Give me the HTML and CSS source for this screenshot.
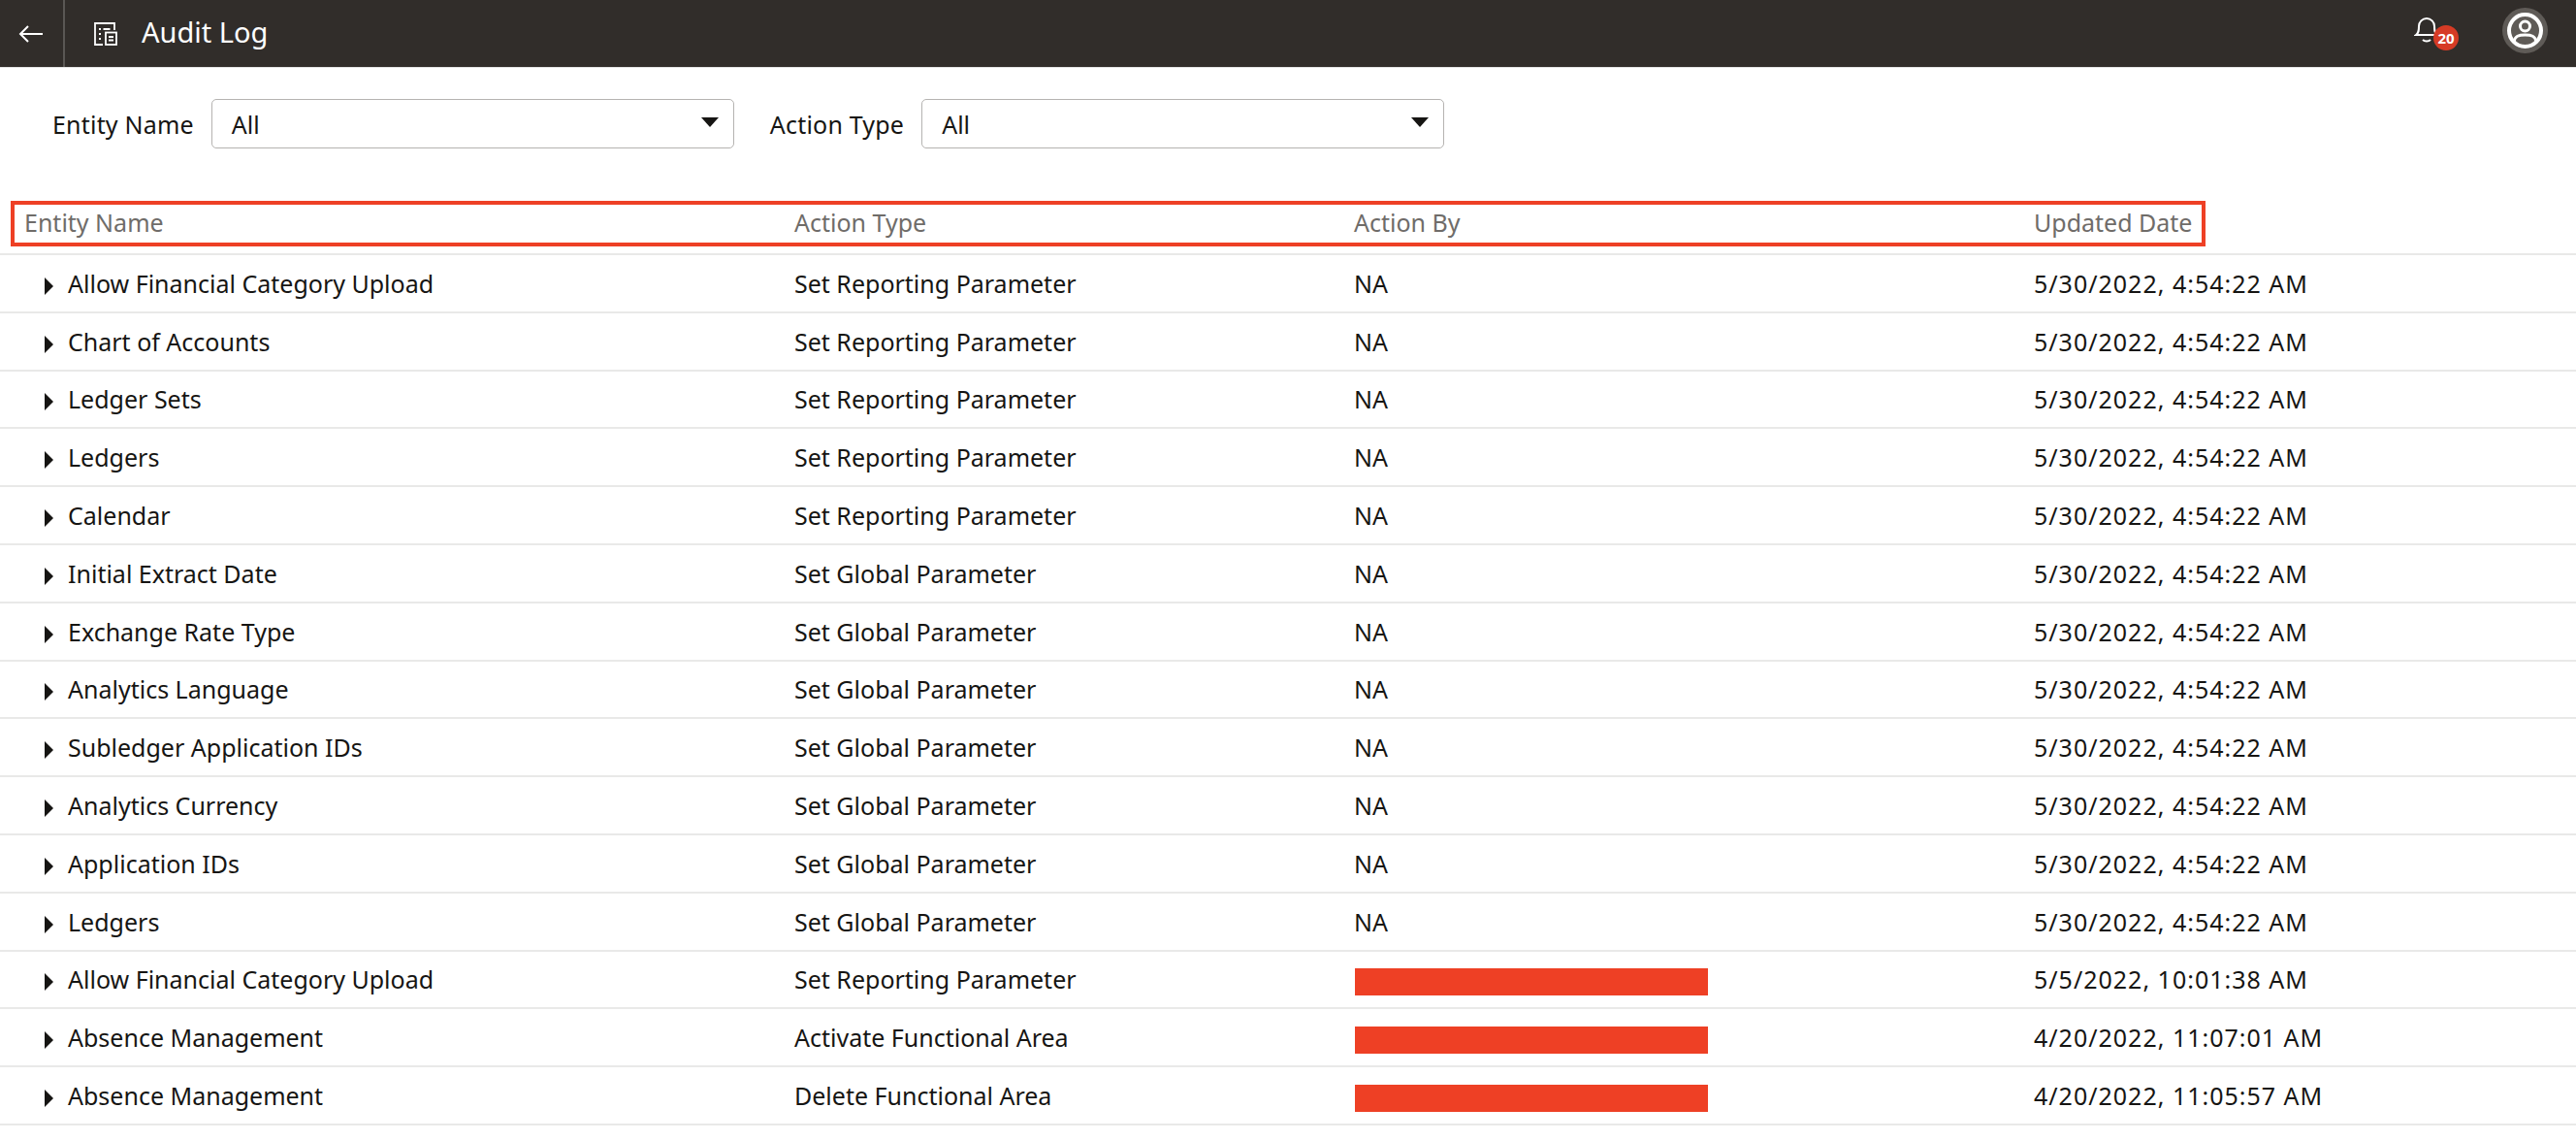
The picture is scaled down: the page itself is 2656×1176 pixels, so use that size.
FILE: index.html
```html
<!DOCTYPE html>
<html lang="en">
<head>
<meta charset="utf-8">
<title>Audit Log</title>
<link rel="stylesheet" href="styles.css">
</head>
<body>
<header class="topbar">
    <a class="back" href="#" aria-label="Back">
        <svg width="26" height="20" viewBox="0 0 26 20" fill="none" stroke="#fff" stroke-width="2"><path d="M25 10H2M10 2l-8 8 8 8"/></svg>
    </a>
    <div class="title">
        <svg width="24" height="24" viewBox="0 0 24 24" fill="none" stroke="#fff" stroke-width="1.800"><path d="M9 23H1V1h20v7"/><rect x="12" y="10.500" width="11" height="12.500"/><path d="M15 15h5M15 18.500h5M5 7h2M9.500 7h7M5 12h2M5 17h2"/></svg>
        <h1>Audit Log</h1>
    </div>
    <div class="bell">
        <svg width="26" height="28" viewBox="0 0 26 28" fill="none" stroke="#fff" stroke-width="2"><path d="M2 19c3-2 3-5 3-9a8 8 0 0 1 16 0c0 4 0 7 3 9z"/><path d="M9 24c2 2 6 2 8 0"/></svg>
        <span class="badge">20</span>
    </div>
    <div class="avatar">
        <svg width="47" height="47" viewBox="0 0 47 47" fill="none"><circle cx="23.5" cy="23.5" r="23.5" fill="#5f5b57"/><circle cx="23.5" cy="23.5" r="16.5" stroke="#fff" stroke-width="4"/><circle cx="23.5" cy="19" r="5" stroke="#fff" stroke-width="3"/><path d="M12 35c1-6 5-7 11.500-7S34 29 35 35" stroke="#fff" stroke-width="3"/></svg>
    </div>
</header>

<form class="filters">
    <label class="filter-label">Entity Name</label>
    <div class="select"><span>All</span><i class="caret"></i></div>
    <label class="filter-label second">Action Type</label>
    <div class="select"><span>All</span><i class="caret"></i></div>
</form>

<div class="log">
    <div class="callout"></div>
    <table>
        <colgroup>
            <col class="col-entity"><col class="col-type"><col class="col-by"><col>
        </colgroup>
        <thead>
            <tr><th class="first">Entity Name</th><th>Action Type</th><th>Action By</th><th>Updated Date</th></tr>
        </thead>
        <tbody>
            <tr><td class="first"><i class="arrow"></i>Allow Financial Category Upload</td><td>Set Reporting Parameter</td><td>NA</td><td class="date">5/30/2022, 4:54:22 AM</td></tr>
            <tr><td class="first"><i class="arrow"></i>Chart of Accounts</td><td>Set Reporting Parameter</td><td>NA</td><td class="date">5/30/2022, 4:54:22 AM</td></tr>
            <tr><td class="first"><i class="arrow"></i>Ledger Sets</td><td>Set Reporting Parameter</td><td>NA</td><td class="date">5/30/2022, 4:54:22 AM</td></tr>
            <tr><td class="first"><i class="arrow"></i>Ledgers</td><td>Set Reporting Parameter</td><td>NA</td><td class="date">5/30/2022, 4:54:22 AM</td></tr>
            <tr><td class="first"><i class="arrow"></i>Calendar</td><td>Set Reporting Parameter</td><td>NA</td><td class="date">5/30/2022, 4:54:22 AM</td></tr>
            <tr><td class="first"><i class="arrow"></i>Initial Extract Date</td><td>Set Global Parameter</td><td>NA</td><td class="date">5/30/2022, 4:54:22 AM</td></tr>
            <tr><td class="first"><i class="arrow"></i>Exchange Rate Type</td><td>Set Global Parameter</td><td>NA</td><td class="date">5/30/2022, 4:54:22 AM</td></tr>
            <tr><td class="first"><i class="arrow"></i>Analytics Language</td><td>Set Global Parameter</td><td>NA</td><td class="date">5/30/2022, 4:54:22 AM</td></tr>
            <tr><td class="first"><i class="arrow"></i>Subledger Application IDs</td><td>Set Global Parameter</td><td>NA</td><td class="date">5/30/2022, 4:54:22 AM</td></tr>
            <tr><td class="first"><i class="arrow"></i>Analytics Currency</td><td>Set Global Parameter</td><td>NA</td><td class="date">5/30/2022, 4:54:22 AM</td></tr>
            <tr><td class="first"><i class="arrow"></i>Application IDs</td><td>Set Global Parameter</td><td>NA</td><td class="date">5/30/2022, 4:54:22 AM</td></tr>
            <tr><td class="first"><i class="arrow"></i>Ledgers</td><td>Set Global Parameter</td><td>NA</td><td class="date">5/30/2022, 4:54:22 AM</td></tr>
            <tr><td class="first"><i class="arrow"></i>Allow Financial Category Upload</td><td>Set Reporting Parameter</td><td><span class="redacted"></span></td><td class="date">5/5/2022, 10:01:38 AM</td></tr>
            <tr><td class="first"><i class="arrow"></i>Absence Management</td><td>Activate Functional Area</td><td><span class="redacted"></span></td><td class="date">4/20/2022, 11:07:01 AM</td></tr>
            <tr><td class="first"><i class="arrow"></i>Absence Management</td><td>Delete Functional Area</td><td><span class="redacted"></span></td><td class="date">4/20/2022, 11:05:57 AM</td></tr>
        </tbody>
    </table>
</div>
</body>
</html>
```

FILE: styles.css
```css
html, body {
    margin: 0;
    height: 1176px;
    overflow: hidden;
    background: #fff;
    font-family: "Noto Sans", "Open Sans", sans-serif;
    color: #161513;
}

.topbar {
    display: flex;
    align-items: center;
    height: 69px;
    background: #312d2a;
    border-bottom: 1px solid #e4e4e4;
    color: #fff;
}

.back {
    display: flex;
    align-items: center;
    justify-content: center;
    box-sizing: border-box;
    width: 67px;
    height: 69px;
    padding-right: 2px;
    border-right: 2px solid #5a5754;
}

.title {
    display: flex;
    align-items: center;
    flex: 1;
    gap: 25px;
    padding-left: 30px;
}

.title h1 {
    margin: 0 0 4px;
    font-size: 29px;
    font-weight: 400;
}

.bell {
    position: relative;
    width: 26px;
    height: 28px;
    margin-right: 65px;
    margin-top: -7px;
}

.bell svg {
    display: block;
}

.badge {
    position: absolute;
    left: 20px;
    top: 9px;
    width: 26px;
    height: 26px;
    border-radius: 50%;
    background: #d63b25;
    color: #fff;
    font-size: 15px;
    font-weight: 700;
    line-height: 26px;
    text-align: center;
}

.avatar {
    height: 47px;
    margin-right: 29px;
    margin-top: -7px;
}

.filters {
    display: flex;
    align-items: center;
    height: 51px;
    margin-top: 32px;
    padding-left: 54px;
}

.filter-label {
    margin-right: 18px;
    font-size: 25px;
    letter-spacing: 0.2px;
}

.filter-label.second {
    margin-left: 37px;
}

.select {
    display: flex;
    align-items: center;
    justify-content: space-between;
    box-sizing: border-box;
    width: 539px;
    height: 51px;
    padding: 0 15px 0 20px;
    border: 1px solid #b5b3b1;
    border-radius: 5px;
    font-size: 25px;
}

.caret {
    width: 0;
    height: 0;
    margin-top: -3px;
    border-left: 9px solid transparent;
    border-right: 9px solid transparent;
    border-top: 10px solid #161513;
}

.log {
    position: relative;
    margin-top: 54px;
}

.callout {
    position: absolute;
    left: 11px;
    top: 0;
    box-sizing: border-box;
    width: 2263px;
    height: 47px;
    border: 4px solid #ee4025;
}

table {
    width: 100%;
    border-collapse: collapse;
    table-layout: fixed;
    font-size: 25px;
}

.col-entity { width: 792px; }
.col-type { width: 577px; }
.col-by { width: 701px; }

th {
    height: 55px;
    padding: 0 0 11px 27px;
    box-sizing: border-box;
    border-bottom: 2px solid #e9e9e8;
    color: #6f6c69;
    font-weight: 400;
    text-align: left;
}

th.first {
    padding-left: 25px;
}

td {
    height: 59.8px;
    padding: 0 0 0 27px;
    box-sizing: border-box;
    border-bottom: 2px solid #e9e9e8;
    white-space: nowrap;
}

td.first {
    padding-left: 46px;
}

td.date {
    letter-spacing: 1px;
}

.arrow {
    display: inline-block;
    width: 0;
    height: 0;
    margin-right: 15px;
    border-top: 9px solid transparent;
    border-bottom: 9px solid transparent;
    border-left: 9px solid #161513;
    vertical-align: -2px;
}

.redacted {
    display: block;
    width: 364px;
    height: 28px;
    margin: 5px 0 0 1px;
    background: #ee4025;
}
```
